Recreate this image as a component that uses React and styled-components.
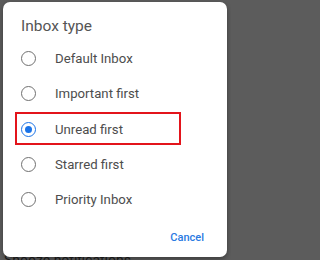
import React, { useState } from "react";
import styled, { createGlobalStyle } from "styled-components";

const Global = createGlobalStyle`
  html, body { margin: 0; padding: 0; }
  body {
    background: #5c5c5c;
    font-family: Roboto, "Noto Sans", Arial, sans-serif;
    -webkit-font-smoothing: antialiased;
  }
`;

const Page = styled.div`
  position: relative;
  width: 231px;
  height: 260px;
  overflow: hidden;
  background: #5c5c5c;
`;

const Backdrop = styled.div`
  padding: 250px 0 0 4px;
`;

const BehindText = styled.div`
  font-size: 14px;
  line-height: 20px;
  color: #1e1e1e;
`;

const Dialog = styled.div`
  position: absolute;
  left: 3px;
  top: 2px;
  width: 224px;
  height: 255px;
  box-sizing: border-box;
  background: #ffffff;
  border-radius: 7px;
  box-shadow: 0 2px 5px rgba(0, 0, 0, 0.35);
  padding-top: 14px;
  display: flex;
  flex-direction: column;
`;

const Title = styled.h2`
  margin: 0 0 5px 0;
  padding-left: 18px;
  font-size: 15.5px;
  line-height: 20px;
  font-weight: 400;
  color: #555555;
`;

const List = styled.div`
  display: flex;
  flex-direction: column;
`;

const Row = styled.label`
  position: relative;
  display: flex;
  align-items: center;
  gap: 19px;
  height: 35.3px;
  padding-left: 18px;
  cursor: pointer;
  font-size: 13.2px;
  color: #4d4d4d;

  ${(p) =>
    p.$highlight &&
    `
    &::after {
      content: "";
      position: absolute;
      left: 12px;
      top: 0px;
      width: 166px;
      height: 33px;
      box-sizing: border-box;
      border: 2px solid #e3141b;
      pointer-events: none;
    }
  `}
`;

const Radio = styled.span`
  width: 15px;
  height: 15px;
  box-sizing: border-box;
  border-radius: 50%;
  border: 1.7px solid ${(p) => (p.$checked ? "#1a73e8" : "#707070")};
  display: flex;
  align-items: center;
  justify-content: center;
  flex: none;

  &::before {
    content: "";
    width: 7px;
    height: 7px;
    border-radius: 50%;
    background: ${(p) => (p.$checked ? "#1a73e8" : "transparent")};
  }
`;

const Footer = styled.div`
  display: flex;
  justify-content: flex-end;
  margin-top: 11px;
  padding-right: 23px;
`;

const TextButton = styled.button`
  border: none;
  background: none;
  padding: 0;
  font-family: inherit;
  font-size: 11px;
  line-height: 20px;
  font-weight: 500;
  color: #2a7ae2;
  cursor: pointer;
`;

const options = [
  "Default Inbox",
  "Important first",
  "Unread first",
  "Starred first",
  "Priority Inbox",
];

export default function App() {
  const [selected, setSelected] = useState("Unread first");
  return (
    <Page>
      <Global />
      <Backdrop>
        <BehindText>Snooze notifications</BehindText>
      </Backdrop>
      <Dialog role="dialog">
        <Title>Inbox type</Title>
        <List>
          {options.map((o) => (
            <Row
              key={o}
              $highlight={o === "Unread first"}
              onClick={() => setSelected(o)}
            >
              <Radio $checked={selected === o} />
              {o}
            </Row>
          ))}
        </List>
        <Footer>
          <TextButton>Cancel</TextButton>
        </Footer>
      </Dialog>
    </Page>
  );
}
